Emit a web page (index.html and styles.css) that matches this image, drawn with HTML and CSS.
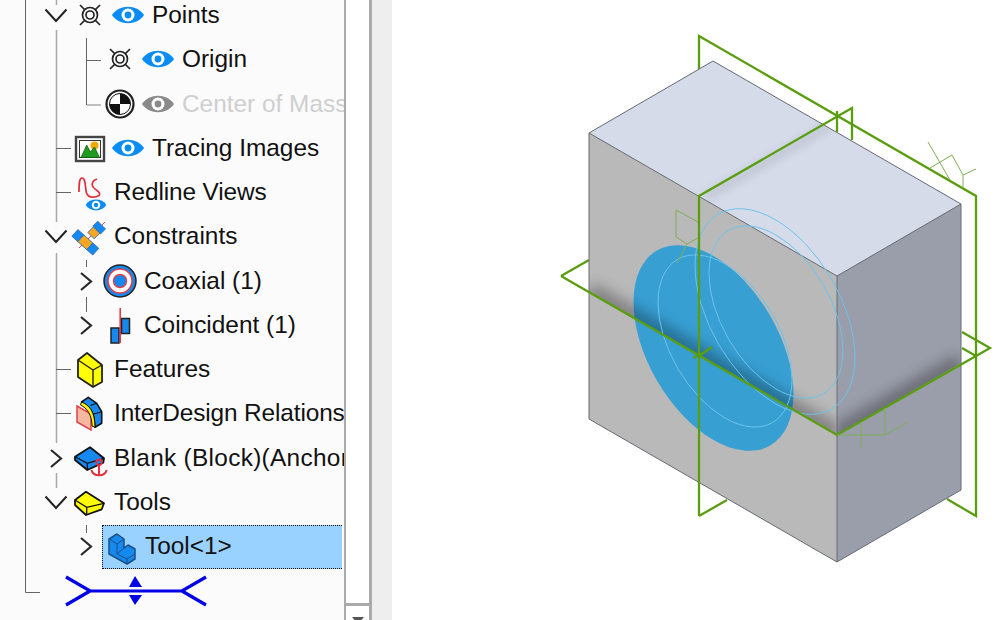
FILE: index.html
```html
<!DOCTYPE html>
<html lang="en">
<head>
  <meta charset="UTF-8" />
  <title>Feature tree</title>
  <link rel="stylesheet" href="styles.css">
</head>
<body>

  <!-- shared icon parts -->
  <svg class="sprite" aria-hidden="true">
    <defs>
      <symbol id="eye" viewBox="0 0 32 18">
        <path d="M0 9C7 -2 25 -2 32 9C25 20 7 20 0 9Z" fill="currentColor"/>
        <circle cx="16" cy="9" r="6.500" fill="#fff"/>
        <circle cx="16" cy="9" r="3.400" fill="currentColor"/>
      </symbol>
      <symbol id="chev-down" viewBox="0 0 28 28">
        <path d="M3.500 8.500L14 20L24.500 8.500" fill="none" stroke="#222" stroke-width="2"/>
      </symbol>
      <symbol id="chev-right" viewBox="0 0 28 28">
        <path d="M9 6L19 14.500L9 23" fill="none" stroke="#2a2a2a" stroke-width="2.200"/>
      </symbol>
      <symbol id="point" viewBox="0 0 40 40">
        <g fill="none" stroke="#222" stroke-width="1.700">
          <path d="M10 10L30 30M30 10L10 30"/>
          <circle cx="20" cy="20" r="7.500" fill="#fafafa"/>
          <circle cx="20" cy="20" r="4"/>
        </g>
      </symbol>
    </defs>
  </svg>

  <div class="app">
    <div class="tree-pane">
      <!-- tree guide lines, drawn over the rows -->
      <svg class="guides" width="344" height="620">
        <path class="g-frame" d="M25.500 0V592.500H40"/>
        <path class="g-main" d="M56.500 0V5M56.500 30V222M56.500 253V443M56.500 473V488"/>
        <path class="g-branch" d="M56 148.500H71M56 192.500H71M56 369.500H71M56 413.500H71"/>
        <path class="g-branch" d="M86.500 38V105M86 60.500H101M86.500 260V267M86.500 297V312M86.500 525V533"/>
        <path class="g-soft" d="M87 105H101"/>
      </svg>

      <div class="tree">
        <div class="row d1">
          <svg class="chev"><use href="#chev-down"/></svg>
          <svg class="icon"><use href="#point"/></svg>
          <svg class="eye"><use href="#eye"/></svg>
          <span class="label">Points</span>
        </div>
        <div class="row d2">
          <span class="chev"></span>
          <svg class="icon"><use href="#point"/></svg>
          <svg class="eye"><use href="#eye"/></svg>
          <span class="label">Origin</span>
        </div>
        <div class="row d2 off">
          <span class="chev"></span>
          <svg class="icon" viewBox="0 0 40 40">
            <circle cx="20" cy="20" r="13.500" fill="#fff" stroke="#222" stroke-width="2.200"/>
            <circle cx="20" cy="20" r="10.500" fill="#fff" stroke="#111" stroke-width="1"/>
            <path d="M20 20V9.500A10.500 10.500 0 0 1 30.500 20ZM20 20V30.500A10.500 10.500 0 0 1 9.500 20Z" fill="#111"/>
          </svg>
          <svg class="eye"><use href="#eye"/></svg>
          <span class="label">Center of Mass</span>
        </div>
        <div class="row d1">
          <span class="chev"></span>
          <svg class="icon" viewBox="0 0 40 40">
            <rect x="6" y="9" width="28" height="24" fill="#fff" stroke="#444" stroke-width="2.400"/>
            <rect x="9.500" y="12.500" width="21" height="17" fill="#fff" stroke="#333" stroke-width="1"/>
            <circle cx="24.500" cy="17.500" r="4" fill="#f5a800"/>
            <path d="M11 29.500L16.700 17L20.500 24L24.500 19L29.500 29.500Z" fill="#1f9c1f" stroke="#0c5a0c" stroke-width="0.700"/>
          </svg>
          <svg class="eye"><use href="#eye"/></svg>
          <span class="label">Tracing Images</span>
        </div>
        <div class="row d1">
          <span class="chev"></span>
          <svg class="icon" viewBox="0 0 40 40">
            <path d="M9 20C9 13 9 6 12 6C16 6 15 16 16.500 21C18 26 25 26 29 23.500C32 20 24 18 22.500 14C21.500 10 24 8 27 7" fill="none" stroke="#e2303c" stroke-width="1.700"/>
            <svg class="eye-small" x="15.500" y="26.500" width="21" height="13" viewBox="0 0 32 18"><use href="#eye"/></svg>
          </svg>
          <span class="label tight">Redline Views</span>
        </div>
        <div class="row d1">
          <svg class="chev"><use href="#chev-down"/></svg>
          <svg class="icon" viewBox="0 0 40 40">
            <path d="M9 32L35 6" stroke="#e2505c" stroke-width="1"/>
            <g transform="translate(15.300 26.300) rotate(42)" stroke="#2b6aa8" stroke-width="0.800">
              <rect x="-14" y="-4.500" width="8" height="9" fill="#1689f0"/>
              <rect x="-6" y="-4.500" width="12" height="9" fill="#f5a623"/>
              <rect x="6" y="-4.500" width="8" height="9" fill="#1689f0"/>
            </g>
            <g transform="translate(26.700 14) rotate(-45)" stroke="#2b6aa8" stroke-width="0.800">
              <rect x="-8" y="-4.500" width="8" height="9" fill="#f5a623"/>
              <rect x="0" y="-5.500" width="7" height="11" fill="#1689f0"/>
            </g>
          </svg>
          <span class="label">Constraints</span>
        </div>
        <div class="row d2">
          <svg class="chev"><use href="#chev-right"/></svg>
          <svg class="icon" viewBox="0 0 40 40">
            <circle cx="20" cy="20" r="16" fill="#1689f0" stroke="#222" stroke-width="1.500"/>
            <circle cx="20" cy="20" r="12" fill="#fff" stroke="#e2404c" stroke-width="1.600"/>
            <circle cx="20" cy="20" r="6.500" fill="#1689f0" stroke="#e2404c" stroke-width="1.500"/>
          </svg>
          <span class="label">Coaxial (1)</span>
        </div>
        <div class="row d2">
          <svg class="chev"><use href="#chev-right"/></svg>
          <svg class="icon" viewBox="0 0 40 40">
            <rect x="11" y="23" width="8" height="15" fill="#1689f0" stroke="#222" stroke-width="1.500"/>
            <rect x="21.500" y="13.500" width="8" height="15" fill="#1689f0" stroke="#222" stroke-width="1.500"/>
            <path d="M20.200 3V38" stroke="#e2303c" stroke-width="1.500"/>
          </svg>
          <span class="label">Coincident (1)</span>
        </div>
        <div class="row d1">
          <span class="chev"></span>
          <svg class="icon" viewBox="0 0 40 40">
            <path d="M8 11L17 4L32 16V33L23 38L8 28Z" fill="#ffff00" stroke="#222" stroke-width="1.800" stroke-linejoin="round"/>
            <path d="M8 11L23 21L32 16M23 21V38" fill="none" stroke="#222" stroke-width="1.400"/>
          </svg>
          <span class="label">Features</span>
        </div>
        <div class="row d1">
          <span class="chev"></span>
          <svg class="icon" viewBox="0 0 40 40">
            <path d="M7 13L21 21V37L7 29Z" fill="#f4b8a0" stroke="#e2404c" stroke-width="1.500"/>
            <path d="M11.500 9L18.300 4.300L26.700 10.300L31.700 18.700V30.300L25 34.300L24 25C23 18 18 13 11.500 9Z" fill="#1689f0" stroke="#111" stroke-width="1.600" stroke-linejoin="round"/>
            <path d="M11.500 9C19 12 25 18 25 34.300L22 33C22 22 17 15 10.500 12Z" fill="#ffee00" stroke="#111" stroke-width="1"/>
            <path d="M20.500 12.500L26.700 10.300M24 21L31.700 18.700" fill="none" stroke="#111" stroke-width="1.100"/>
          </svg>
          <span class="label tight">InterDesign Relations</span>
        </div>
        <div class="row d1">
          <svg class="chev"><use href="#chev-right"/></svg>
          <svg class="icon" viewBox="0 0 40 40">
            <path d="M5 18.700L20 9.300L34 20.300L33.300 24.700L17.300 32L5 22Z" fill="#1689f0" stroke="#111" stroke-width="1.800" stroke-linejoin="round"/>
            <path d="M5 18.700L17.300 25.300L34 20.300M17.300 25.300V32" fill="none" stroke="#111" stroke-width="1.300"/>
            <circle cx="29" cy="24.300" r="2.800" fill="none" stroke="#e63040" stroke-width="1.800"/>
            <path d="M29 27V37.500M21.500 32C23 39 35 39 36.700 32" fill="none" stroke="#e63040" stroke-width="2"/>
          </svg>
          <span class="label wide">Blank (Block)(Anchored)</span>
        </div>
        <div class="row d1">
          <svg class="chev"><use href="#chev-down"/></svg>
          <svg class="icon" viewBox="0 0 40 40">
            <path d="M5 18L16 9.700L34 21.300L31.700 27.300L16 33L5 23Z" fill="#ffff00" stroke="#111" stroke-width="1.800" stroke-linejoin="round"/>
            <path d="M5 18L16.700 25.300L34 21.300M16.700 25.300V33" fill="none" stroke="#111" stroke-width="1.300"/>
          </svg>
          <span class="label">Tools</span>
        </div>
        <div class="row d2">
          <svg class="chev"><use href="#chev-right"/></svg>
          <div class="selected">
            <svg class="icon" viewBox="0 0 40 40">
              <path d="M9 12L17 7L24 12V21L28 18L35 22V32L27 37L9 27Z" fill="#1689f0" stroke="#1d4f86" stroke-width="1.500" stroke-linejoin="round"/>
              <path d="M9 12L17 17L24 12M17 17V27L27 32L35 27M27 32V37M17 27L24 21" fill="none" stroke="#1d4f86" stroke-width="1"/>
            </svg>
            <span class="label">Tool&lt;1&gt;</span>
          </div>
        </div>
      </div>

      <svg class="rollback" width="142" height="32" viewBox="65 576 142 32">
        <path d="M66 578L90 592H182L206 578M66 606L90 592M182 592L206 606" fill="none" stroke="#0000e6" stroke-width="3.200"/>
        <path d="M135 577L142 588H129ZM129 596H142L135 606Z" fill="#0000e6"/>
      </svg>
    </div>

    <div class="scroll">
      <div class="scroll-track"></div>
      <div class="scroll-btn"><span class="scroll-arrow"></span></div>
    </div>
    <div class="splitter"></div>

    <div class="viewport">
      <svg width="608" height="620" viewBox="392 0 608 620">
        <defs>
          <filter id="blur8" x="-30%" y="-30%" width="160%" height="160%"><feGaussianBlur stdDeviation="7"/></filter>
          <filter id="blur4" x="-30%" y="-30%" width="160%" height="160%"><feGaussianBlur stdDeviation="4"/></filter>
          <clipPath id="leftUpper"><path d="M589 133L837 276V435L589 292Z"/></clipPath>
          <clipPath id="leftLower"><path d="M589 292L837 435V562L589 419Z"/></clipPath>
          <clipPath id="rightUpper"><path d="M837 276L961 204V363L837 435Z"/></clipPath>
          <clipPath id="topFace"><path d="M713 61L961 204L837 276L589 133Z"/></clipPath>
        </defs>

        <!-- datum planes behind the block -->
        <g class="plane">
          <path d="M699 70V36L976 196V516L947 499"/>
          <path d="M699 516L727 500"/>
          <path d="M589 260L561 276"/>
          <path d="M962 332L990 348L976 356M962 348L976 356"/>
        </g>

        <!-- block -->
        <path d="M713 61L961 204L837 276L589 133Z" fill="#d6dbea"/>
        <path d="M589 133L837 276V562L589 419Z" fill="#b9b9b9"/>
        <path d="M837 276L961 204V490L837 562Z" fill="#9a9eaa"/>

        <!-- cap on the front face -->
        <circle r="1" transform="matrix(80 46 0 92 713.500 348)" fill="#389fd3"/>

        <!-- soft shadows where the planes cut the block -->
        <g clip-path="url(#leftUpper)">
          <path class="shade" d="M589 292L837 435" stroke-width="20" filter="url(#blur8)"/>
          <path class="shade faint" d="M692 196V300" stroke-width="10" filter="url(#blur4)"/>
        </g>
        <g clip-path="url(#leftLower)">
          <path class="shade faint" d="M706 380V520" stroke-width="12" filter="url(#blur4)"/>
        </g>
        <g clip-path="url(#rightUpper)">
          <path class="shade" d="M837 435L961 363" stroke-width="20" filter="url(#blur8)"/>
        </g>
        <g clip-path="url(#topFace)">
          <path class="shade faint" d="M706 197L832 124" stroke-width="8" filter="url(#blur4)"/>
        </g>

        <!-- block edges -->
        <path d="M713 61L961 204V490L837 562L589 419V133ZM589 133L837 276L961 204M837 276V562" fill="none" stroke="#666a72" stroke-width="1"/>

        <!-- sketch circles -->
        <g class="sketch">
          <circle r="1" transform="matrix(80 46 0 92 775 311.500)"/>
          <circle r="1" transform="matrix(67 38.500 0 77 776 312)"/>
          <circle r="1" transform="matrix(67 38.500 0 77 725 341)"/>
        </g>

        <!-- datum planes in front -->
        <g class="plane">
          <path d="M699 516V196L852 108V140"/>
          <path d="M837 111V132"/>
          <path d="M561 276L837 435L976 356"/>
          <path d="M693 358L705 352M699 356L712 347"/>
        </g>

        <!-- plane name marks -->
        <g class="mark">
          <path d="M928 142L950 180M930 168L952 155L963 175V188M963 175L976 169"/>
          <path d="M698 222L676 210V237L687 244L698 238M687 244L677 263"/>
          <path d="M837 435H885L908 422M885 435V408M861 422V448"/>
        </g>
      </svg>
    </div>
  </div>

</body>
</html>
```

FILE: styles.css
```css
*{box-sizing:border-box}
body{
  margin:0;
  width:1000px;
  height:620px;
  overflow:hidden;
  background:#fff;
  font-family:"Liberation Sans",Arial,sans-serif;
}
.sprite{width:0;height:0;display:block}
.app{display:flex;height:620px}

/* ---------- tree ---------- */
.tree-pane{
  position:relative;
  width:344px;
  height:620px;
  flex:none;
  overflow:hidden;
  background:#fbfbfb;
}
.guides{position:absolute;left:0;top:0;pointer-events:none}
.guides path{fill:none}
.g-frame{stroke:#666;stroke-width:1}
.g-main{stroke:#a8a8a8;stroke-width:1.500}
.g-branch{stroke:#666;stroke-width:1}
.g-soft{stroke:#aaa;stroke-width:1.500}

.tree{margin-top:-7px;position:relative}
.row{
  display:flex;
  align-items:center;
  height:44.25px;
  font-size:24.4px;
  color:#111;
  white-space:nowrap;
}
.d1{padding-left:42px}
.d2{padding-left:72px}
.chev{width:28px;height:28px;flex:none}
.icon{width:40px;height:40px;flex:none;margin-right:4px;overflow:visible}
.eye{width:32px;height:18px;flex:none;margin:0 8px 0 -2px;color:#0a8cf5}
.eye-small{color:#0a8cf5}
.off .eye{color:#8a8a8a}
.off .label{color:#cfcfcf}
.label{display:block;line-height:28px}
.tight{letter-spacing:-.12px}
.wide{letter-spacing:.3px}

.selected{
  display:flex;
  align-items:center;
  flex:1;
  height:44px;
  margin:2px 2px 0;
  background:#99d1ff;
  border:1px dotted #111;
  border-right:0;
}
.selected .icon{margin-left:-3px}
.selected .label{margin:-2px 0 0 1px}

.rollback{display:block;margin:7px 0 0 65px}

/* ---------- scroll bar ---------- */
.scroll{
  display:flex;
  flex-direction:column;
  width:28px;
  flex:none;
  background:#fff;
  border-left:2px solid #aaa;
  border-right:3px solid #aaa;
}
.scroll-track{flex:1}
.scroll-btn{
  height:17px;
  flex:none;
  border-top:3px solid #aaa;
  display:flex;
  justify-content:center;
  padding-top:11px;
}
.scroll-arrow{
  width:0;
  height:0;
  border-left:6px solid transparent;
  border-right:6px solid transparent;
  border-top:7px solid #555;
}
.splitter{width:20px;flex:none;background:#eeeeee}

/* ---------- 3d view ---------- */
.viewport{flex:1;background:#fff}
.viewport svg{display:block}
.plane path{fill:none;stroke:#5a9e10;stroke-width:2.300}
.mark path{fill:none;stroke:#7fae55;stroke-width:1}
.sketch circle{fill:none;stroke:#6cc4ec;stroke-width:1;vector-effect:non-scaling-stroke}
.shade{fill:none;stroke:#000;opacity:.3}
.shade.faint{opacity:.1}
```
